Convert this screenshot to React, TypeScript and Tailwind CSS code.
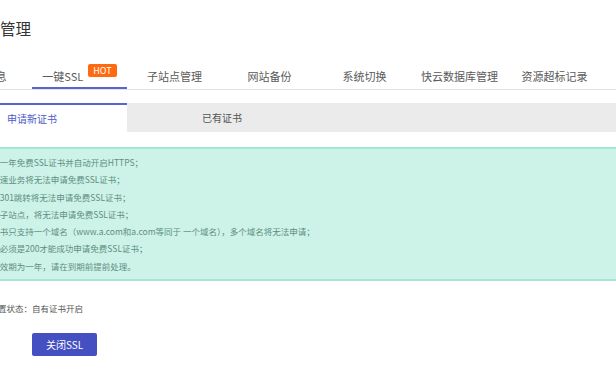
import React from 'react';

const font = { fontFamily: '"Noto Sans CJK SC", "Noto Sans", sans-serif' };

const topTabs = [
  { label: '基本信息' },
  { label: '一键SSL', hot: true, active: true },
  { label: '子站点管理' },
  { label: '网站备份' },
  { label: '系统切换' },
  { label: '快云数据库管理' },
  { label: '资源超标记录' },
];

const tips = [
  '1、可申请一年免费SSL证书并自动开启HTTPS；',
  '2、开启加速业务将无法申请免费SSL证书；',
  '3、设置了301跳转将无法申请免费SSL证书；',
  '4、绑定的子站点，将无法申请免费SSL证书；',
  '5、免费证书只支持一个域名（www.a.com和a.com等同于 一个域名），多个域名将无法申请；',
  '6、状态码必须是200才能成功申请免费SSL证书；',
  '7、证书有效期为一年，请在到期前提前处理。',
];

const App: React.FC = () => {
  return (
    <div className="w-[616px] h-[380px] overflow-hidden bg-white" style={font}>
      <div className="-ml-[63px] w-[700px]">
        {/* Title */}
        <div className="pt-[18px] pl-[32px] text-[15.5px] leading-[20px] text-[#333]">网站管理</div>

        {/* Top tabs */}
        <div className="mt-[28px] flex border-b border-[#e3e3e3]">
          {topTabs.map((tab, i) => (
            <div
              key={i}
              className={`w-[95px] h-[23px] flex items-center justify-center text-[11px] text-[#5a5a5a] border-b-2 ${
                tab.active ? 'border-[#5b63d3]' : 'border-transparent'
              }`}
            >
              <span>{tab.label}</span>
              {tab.hot && (
                <span className="relative -top-[6px] ml-[5px] px-[5px] h-[13px] leading-[13px] rounded-[2px] bg-[#ff6a10] text-white text-[9px]">
                  HOT
                </span>
              )}
            </div>
          ))}
        </div>

        {/* Sub tabs */}
        <div className="mt-[13px] flex h-[29px] bg-[#ebebeb]">
          <div className="w-[190px] bg-white border-t-2 border-[#5b63d3] flex items-center justify-center text-[10px] text-[#4c5bc9]">
            申请新证书
          </div>
          <div className="w-[190px] flex items-center justify-center text-[10px] text-[#555]">已有证书</div>
        </div>

        {/* Tips */}
        <div className="mt-[15px] border-2 border-[#a6e6d5] bg-[#cdf2e8] pl-[22px] pt-[5px] pb-[4px]">
          {tips.map((t, i) => (
            <div key={i} className="text-[8.5px] leading-[17.3px] text-[#5d8f80] whitespace-nowrap">
              {t}
            </div>
          ))}
        </div>

        {/* Status */}
        <div className="mt-[20px] flex text-[8.5px] leading-[14px] text-[#555]">
          <div className="w-[95px] text-right">SSL配置状态：</div>
          <div>自有证书开启</div>
        </div>

        <div className="mt-[15px] pl-[95px]">
          <button className="w-[65px] h-[23px] rounded-[2px] bg-[#4450c1] text-white text-[10px]">关闭SSL</button>
        </div>
      </div>
    </div>
  );
};

export default App;
